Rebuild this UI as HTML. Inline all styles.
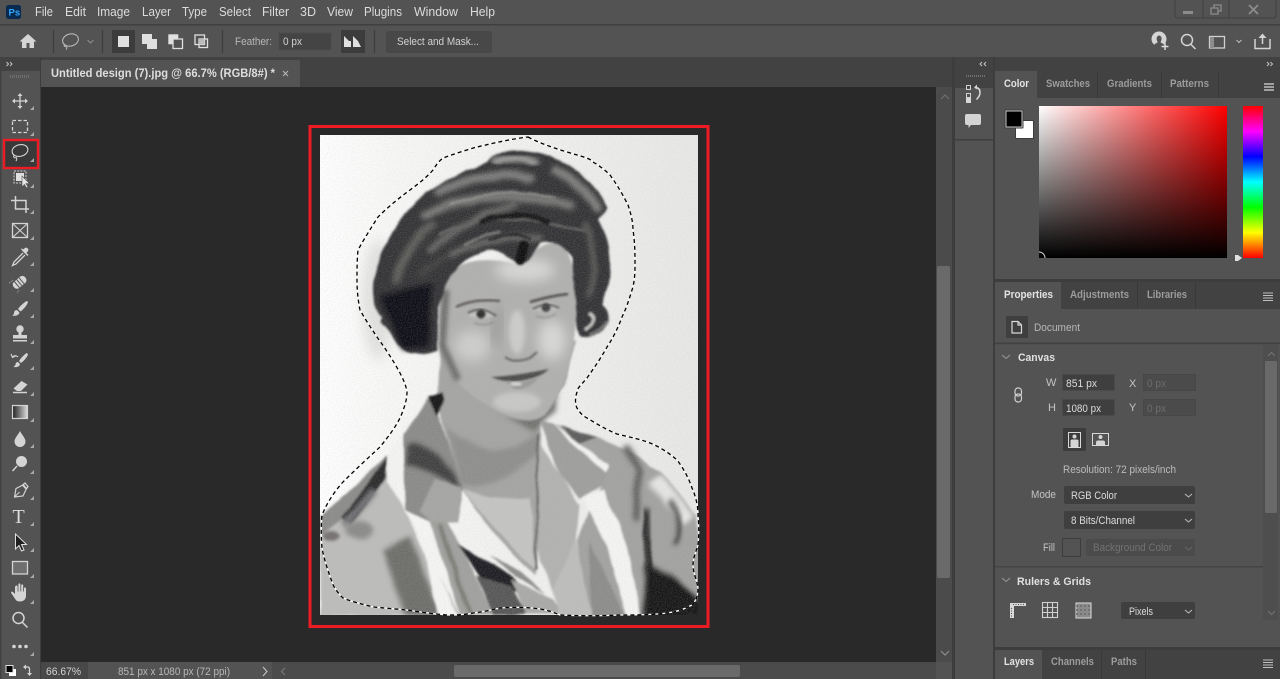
<!DOCTYPE html>
<html><head><meta charset="utf-8"><title>Photoshop</title>
<style>
html,body{margin:0;padding:0;background:#535353;width:1280px;height:679px;overflow:hidden}
svg{display:block}
text{font-family:"Liberation Sans",sans-serif;font-size:12px;fill:#d6d6d6}
.m{font-size:13px;fill:#dcdcdc}
.b{font-weight:bold}
.t{font-weight:bold;font-size:11px;fill:#9c9c9c}
.a{font-weight:bold;font-size:11px;fill:#e4e4e4}
.l{font-size:11px;fill:#c4c4c4}
.i{fill:#d4d4d4}
.s{fill:none;stroke:#d4d4d4;stroke-width:1.5}
.c{fill:none;stroke:#bdbdbd;stroke-width:1}
</style></head><body>
<svg width="1280" height="679" viewBox="0 0 1280 679" xmlns="http://www.w3.org/2000/svg">
<defs>
<linearGradient id="sw" x1="0" x2="1" y1="0" y2="0"><stop offset="0" stop-color="#fff"/><stop offset="1" stop-color="#f00"/></linearGradient>
<linearGradient id="bk" x1="0" x2="0" y1="0" y2="1"><stop offset="0" stop-color="#000" stop-opacity="0"/><stop offset="1" stop-color="#000"/></linearGradient>
<linearGradient id="hue" x1="0" x2="0" y1="0" y2="1"><stop offset="0" stop-color="#f00"/><stop offset=".167" stop-color="#f0f"/><stop offset=".333" stop-color="#00f"/><stop offset=".5" stop-color="#0ff"/><stop offset=".667" stop-color="#0f0"/><stop offset=".833" stop-color="#ff0"/><stop offset="1" stop-color="#f00"/></linearGradient>
<linearGradient id="gr" x1="0" x2="1" y1="0" y2="0"><stop offset="0" stop-color="#222"/><stop offset="1" stop-color="#ddd"/></linearGradient>
<linearGradient id="bg" x1="0" x2="1" y1="0" y2="0"><stop offset="0" stop-color="#fff"/><stop offset=".2" stop-color="#f8f8f7"/><stop offset=".7" stop-color="#eeeeec"/><stop offset="1" stop-color="#e8e8e6"/></linearGradient>
<clipPath id="ph"><rect x="320" y="135" width="378" height="480"/></clipPath>
<filter id="b1" x="-20%" y="-20%" width="140%" height="140%"><feGaussianBlur stdDeviation="1"/></filter>
<filter id="b2" x="-40%" y="-40%" width="180%" height="180%"><feGaussianBlur stdDeviation="2.5"/></filter>
<filter id="b3" x="-60%" y="-60%" width="220%" height="220%"><feGaussianBlur stdDeviation="6"/></filter>
<filter id="org" filterUnits="userSpaceOnUse" x="300" y="120" width="420" height="510">
<feTurbulence type="fractalNoise" baseFrequency=".03" numOctaves="2" seed="4" result="n"/>
<feDisplacementMap in="SourceGraphic" in2="n" scale="6" xChannelSelector="R" yChannelSelector="G"/>
<feGaussianBlur stdDeviation="1.100"/>
</filter>
<filter id="hairf" filterUnits="userSpaceOnUse" x="300" y="120" width="420" height="510">
<feTurbulence type="fractalNoise" baseFrequency=".05" numOctaves="2" seed="9" result="n"/>
<feDisplacementMap in="SourceGraphic" in2="n" scale="4" xChannelSelector="G" yChannelSelector="R"/>
<feGaussianBlur stdDeviation="1"/>
</filter>
<filter id="grain" filterUnits="userSpaceOnUse" x="320" y="135" width="378" height="480">
<feTurbulence type="fractalNoise" baseFrequency=".8" numOctaves="2" seed="2"/>
<feColorMatrix values="0 0 0 0 .5  0 0 0 0 .5  0 0 0 0 .5  .9 0 0 0 -.32"/>
</filter>
</defs>

<!-- base -->
<rect width="1280" height="679" fill="#535353"/>
<!-- top bars -->
<rect x="0" y="24" width="1280" height="1.5" fill="#3f3f3f"/>
<rect x="0" y="57" width="1280" height="31" fill="#424242"/>
<rect x="952" y="57" width="3" height="622" fill="#3d3d3d"/>
<rect x="993" y="57" width="2" height="622" fill="#3d3d3d"/>
<rect x="955" y="58" width="38" height="13" fill="#424242"/>
<rect x="995" y="58" width="285" height="13" fill="#424242"/>
<rect x="0" y="58" width="40" height="13" fill="#424242"/>
<rect x="40" y="58" width="2" height="621" fill="#3d3d3d"/>
<rect x="0" y="71" width="40" height="17" fill="#535353"/>
<rect x="0" y="71" width="1.500" height="608" fill="#424242"/>

<!-- menu -->
<rect x="6" y="5" width="15" height="14" rx="2.5" fill="#0a2b4f"/>
<text x="8.5" y="15.5" style="font-size:9.5px;font-weight:bold;fill:#31a8ff">Ps</text>
<text class="m" x="35" y="16" textLength="18" lengthAdjust="spacingAndGlyphs">File</text>
<text class="m" x="65" y="16" textLength="21" lengthAdjust="spacingAndGlyphs">Edit</text>
<text class="m" x="97" y="16" textLength="33" lengthAdjust="spacingAndGlyphs">Image</text>
<text class="m" x="142" y="16" textLength="29" lengthAdjust="spacingAndGlyphs">Layer</text>
<text class="m" x="182" y="16" textLength="25" lengthAdjust="spacingAndGlyphs">Type</text>
<text class="m" x="219" y="16" textLength="32" lengthAdjust="spacingAndGlyphs">Select</text>
<text class="m" x="262" y="16" textLength="27" lengthAdjust="spacingAndGlyphs">Filter</text>
<text class="m" x="300" y="16" textLength="16" lengthAdjust="spacingAndGlyphs">3D</text>
<text class="m" x="327" y="16" textLength="26" lengthAdjust="spacingAndGlyphs">View</text>
<text class="m" x="364" y="16" textLength="38" lengthAdjust="spacingAndGlyphs">Plugins</text>
<text class="m" x="414" y="16" textLength="44" lengthAdjust="spacingAndGlyphs">Window</text>
<text class="m" x="470" y="16" textLength="25" lengthAdjust="spacingAndGlyphs">Help</text>

<!-- window controls -->
<path d="M1175 0V15q0 3 3 3H1273q3 0 3-3V0" fill="none" stroke="#404040"/>
<path d="M1203 0V18M1229 0V18" stroke="#404040"/>
<rect x="1183" y="11" width="10" height="3" fill="#8c8c8c"/>
<path d="M1211 8h7v6h-7zM1214 8V5h7v6h-3" fill="none" stroke="#8c8c8c" stroke-width="1.3"/>
<path d="M1249 5l9 9M1258 5l-9 9" stroke="#8c8c8c" stroke-width="1.8"/>

<!-- options bar -->
<path d="M28 34l-8.500 7.500h2.500V48h4.500v-5h3v5H34v-6.500h2.500z" class="i"/>
<path d="M53.500 30V53M102.500 30V53M222.500 30V53M374.500 30V53" stroke="#3d3d3d" stroke-width="1.300"/>
<ellipse cx="70.500" cy="40" rx="8" ry="6" transform="rotate(-14 70.500 40)" fill="none" stroke="#b8b8b8" stroke-width="1.100"/>
<path d="M65 44c-2 2 0 3 1.500 2.500c1 1.500 0 2.500-.5 3" fill="none" stroke="#b8b8b8" stroke-width="1"/>
<path d="M87.500 40l3 3 3-3" fill="none" stroke="#8f8f8f"/>
<rect x="112" y="30" width="23" height="23" fill="#3c3c3c"/>
<rect x="118" y="36" width="11" height="11" fill="#e0e0e0"/>
<rect x="142" y="34" width="10" height="10" fill="#e0e0e0"/><rect x="147" y="39" width="10" height="10" fill="#e0e0e0"/>
<rect x="168.800" y="34.800" width="9" height="9" fill="#e0e0e0" stroke="#e0e0e0"/><rect x="173" y="39" width="9.500" height="9.500" fill="#535353" stroke="#e0e0e0" stroke-width="1.300"/>
<rect x="195" y="35" width="9.500" height="9.500" fill="none" stroke="#e0e0e0" stroke-width="1.300"/><rect x="199" y="39" width="8.500" height="8.500" fill="none" stroke="#e0e0e0" stroke-width="1.300"/><rect x="199" y="39" width="5.500" height="5.500" fill="#bbb"/>
<text x="235" y="45" style="font-size:11px;fill:#b8b8b8" textLength="37" lengthAdjust="spacingAndGlyphs">Feather:</text>
<rect x="279" y="33" width="52" height="17" fill="#444" stroke="#4b4b4b"/>
<text x="283" y="45" style="font-size:11px;fill:#d2d2d2" textLength="19" lengthAdjust="spacingAndGlyphs">0 px</text>
<rect x="341" y="30" width="24" height="23" fill="#3c3c3c"/>
<path d="M344 47V36l5 5 2 0v6zM353 47V36l5 5 3 6z" fill="#e0e0e0"/>
<rect x="386.500" y="31.500" width="105" height="21" rx="2" fill="#484848" stroke="#474747"/>
<text x="397" y="45" style="font-size:11px;fill:#d2d2d2" textLength="82" lengthAdjust="spacingAndGlyphs">Select and Mask...</text>

<!-- options right icons -->
<circle cx="1159" cy="39" r="7.500" class="i"/>
<path d="M1159 35.500a2.600 3 0 0 1 2.600 3c0 2-1 3-1 4l3 1.500v3h-9v-3l3-1.500c0-1-1-2-1-4a2.600 3 0 0 1 2.400-3z" fill="#535353"/>
<path d="M1165 43v7M1161.500 46.500h7" stroke="#e0e0e0" stroke-width="1.400"/>
<circle cx="1187" cy="40" r="5.500" class="s"/><path d="M1191 44.500l4.500 4.500" class="s" stroke-width="2"/>
<rect x="1209.500" y="36.500" width="15" height="11.500" fill="none" stroke="#d0d0d0" stroke-width="1.300"/><rect x="1210" y="37" width="4" height="11" fill="#8d8d8d"/>
<path d="M1236.500 40l2.500 2.500 2.500-2.500" class="c"/>
<path d="M1255 39v9.500h15V39" class="s"/><path d="M1262.500 44V35" class="s"/><path d="M1258.500 38l4-4.500 4 4.500z" class="i"/>

<!-- collapse arrows -->
<g fill="none" stroke="#c4c4c4" stroke-width="1">
<path d="M6.500 62l2 2-2 2M10 62l2 2-2 2"/>
<path d="M982 62l-2 2 2 2M986 62l-2 2 2 2"/>
<path d="M1267 62l2 2-2 2M1270.500 62l2 2-2 2"/>
</g>

<!-- document tab -->
<rect x="41" y="60" width="259" height="27" fill="#535353"/>
<text x="51" y="77" class="b" style="fill:#dedede;font-size:12px" textLength="224" lengthAdjust="spacingAndGlyphs">Untitled design (7).jpg @ 66.7% (RGB/8#) *</text>
<path d="M283 71l5 5M288 71l-5 5" stroke="#b5b5b5" stroke-width="1.100"/>

<!-- canvas -->
<rect x="41" y="87" width="895" height="575" fill="#292929"/>

<!-- photo -->
<g clip-path="url(#ph)">
<rect x="320" y="135" width="378" height="480" fill="url(#bg)"/>
<ellipse cx="378" cy="300" rx="16" ry="60" fill="#e2e2e0" filter="url(#b3)"/>

<g filter="url(#org)">
<!-- neck + chest -->
<path d="M440 340L437 405L462 490L500 540L535 575L545 520L540 425L565 385L575 340Z" fill="#a4a4a2"/>
<path d="M463 490L490 498L530 498L536 570L510 545Z" fill="#c4c4c2"/>
<path d="M445 425Q490 470 538 432L540 450Q495 495 462 485Z" fill="#8e8e8c" filter="url(#b2)"/>
<path d="M500 415Q530 428 560 392L555 410L535 432Z" fill="#727270" filter="url(#b2)"/>
<path d="M538 435L536 570" stroke="#5a5a5a" stroke-width="2" fill="none"/>

<!-- shirt left -->
<path d="M320 525L345 500L387 470L405 510L432 562L460 615H320Z" fill="#bcbcba"/>
<path d="M320 518L387 455L385 478L345 518L320 535Z" fill="#8b8b89"/>
<path d="M342 518L387 456L386 478L352 525Z" fill="#29292b"/>
<path d="M345 525L375 490" stroke="#77777a" stroke-width="8" filter="url(#b2)"/>
<path d="M383 552L410 535L435 600L440 615H405Z" fill="#6d6d6b" filter="url(#b2)"/>
<ellipse cx="360" cy="530" rx="14" ry="9" fill="#8a8a88" filter="url(#b2)"/>
<ellipse cx="331" cy="536" rx="9" ry="5" fill="#75706f" filter="url(#b1)"/>
<path d="M407 515L433 562L457 615H437L427 562Z" fill="#f6f6f4"/>
<path d="M430 522H447L473 568L493 615H460L447 572Z" fill="#a0a09e"/>
<path d="M440 525L470 615" stroke="#77776f" stroke-width="4" filter="url(#b1)"/>
<path d="M457 543L512 575L523 590L490 590L473 565Z" fill="#1e1e20"/>
<path d="M477 575L510 585L526 615H493Z" fill="#565656"/>
<path d="M510 578L553 600L562 615H525Z" fill="#a9a9a7"/>
<path d="M490 555L520 570L545 595L515 575Z" fill="#8c8c8a"/>

<!-- collar left -->
<path d="M427 398L403 435L405 508L430 522L457 522L463 488L437 412Z" fill="#8a8a88"/>
<path d="M408 445Q430 440 455 475L462 490L425 470L405 465Z" fill="#3f3f3f" filter="url(#b2)"/>
<path d="M435 480L462 488L457 522L432 522L420 510Z" fill="#a5a5a3"/>
<path d="M388 455L402 435L405 508L387 482Z" fill="#f5f5f3"/>
<path d="M427 397L443 393L445 400L436 415Z" fill="#141414"/>

<!-- shirt right -->
<path d="M557 425L600 438L633 452L660 472L697 515L705 620H590L578 540L600 485Z" fill="#a2a2a0"/>
<path d="M560 425L597 438L578 444Z" fill="#5b5b5b"/>
<path d="M625 445L640 470L635 520" stroke="#616161" stroke-width="7" fill="none" filter="url(#b2)"/>
<path d="M655 480L690 520" stroke="#e6e6e4" stroke-width="14" fill="none" filter="url(#b2)"/>
<path d="M670 500Q685 520 675 545" stroke="#2e2e2e" stroke-width="4" fill="none" filter="url(#b2)"/>
<path d="M645 510L650 570" stroke="#2a2a2a" stroke-width="10" fill="none" filter="url(#b2)"/>
<path d="M645 565L672 575L705 605V620H645Z" fill="#161618" filter="url(#b2)"/>
<path d="M540 442L580 505L577 538L553 592L540 562L538 508Z" fill="#b2b2b0"/>
<path d="M577 538L593 620H560L553 592Z" fill="#bdbdbb"/>
<path d="M590 540L625 620H592Z" fill="#8c8c8a"/>
<path d="M540 422L557 425L608 468L600 485L580 498L560 475Z" fill="#9e9e9c"/>
<path d="M553 423L608 465L605 472L567 438Z" fill="#f4f4f2"/>
<path d="M583 498L603 488L627 548L643 620H627L607 548Z" fill="#f5f5f3"/>
</g>

<!-- face -->
<path d="M443 280C455 262 480 255 515 264C530 258 540 240 560 243C570 250 575 270 576 300C577 320 574 345 570 360C566 380 556 402 545 415C535 423 518 422 500 412C480 402 462 390 450 372C440 350 436 315 443 280Z" fill="#b0b0ae" filter="url(#b1)"/>
<ellipse cx="525" cy="270" rx="30" ry="12" fill="#dededc" filter="url(#b3)" opacity=".85"/>
<ellipse cx="472" cy="346" rx="18" ry="16" fill="#d8d8d6" filter="url(#b3)" opacity=".75"/>
<ellipse cx="552" cy="340" rx="14" ry="20" fill="#e2e2e0" filter="url(#b3)" opacity=".8"/>
<ellipse cx="517" cy="332" rx="8" ry="22" fill="#d6d6d4" filter="url(#b2)" opacity=".75"/>
<path d="M500 308L494 345" stroke="#8f8f8d" stroke-width="6" filter="url(#b3)"/>
<ellipse cx="517" cy="402" rx="24" ry="10" fill="#cececc" filter="url(#b2)" opacity=".8"/>
<path d="M446 290L442 345L458 380" stroke="#6c6c6a" stroke-width="7" fill="none" filter="url(#b2)"/>
<!-- brows -->
<path d="M456 307Q475 298 500 301" stroke="#5a5654" stroke-width="2.500" fill="none" filter="url(#b1)"/>
<path d="M530 302Q550 296 568 294" stroke="#4a4745" stroke-width="2.500" fill="none" filter="url(#b1)"/>
<!-- eyes -->
<ellipse cx="481" cy="314" rx="13" ry="4.500" fill="#c2c2c0" filter="url(#b1)"/>
<path d="M468 313Q482 305 496 316" stroke="#383838" stroke-width="1.500" fill="none" filter="url(#b1)"/>
<circle cx="481" cy="314" r="4.500" fill="#2c2c2c" filter="url(#b1)"/>
<ellipse cx="546" cy="308" rx="12" ry="4.500" fill="#bcbcba" filter="url(#b1)"/>
<path d="M533 309Q546 301 559 308" stroke="#404040" stroke-width="1.400" fill="none" filter="url(#b1)"/>
<circle cx="546" cy="307.500" r="4.500" fill="#414141" filter="url(#b1)"/>
<path d="M474 323Q484 327 494 322M536 316Q546 320 556 314" stroke="#8a8a88" stroke-width="1.300" fill="none" filter="url(#b1)"/>
<!-- nose -->
<path d="M505 357Q514 364 530 358L537 352" stroke="#5b5b59" stroke-width="2" fill="none" filter="url(#b1)"/>
<!-- mouth -->
<path d="M491 377Q515 376 549 369Q540 378 520 381Q505 383 491 377Z" fill="#4a4a48" filter="url(#b1)"/>
<path d="M505 381Q525 384 540 376Q530 390 515 389Z" fill="#9a9a98" filter="url(#b1)"/>
<ellipse cx="516" cy="384" rx="6" ry="1.800" fill="#dcdcda" filter="url(#b1)"/>

<!-- hair -->
<g filter="url(#hairf)">
<path d="M373 290C372 270 385 245 403 215C420 195 445 178 487 162C495 155 505 150 515 150C530 152 540 152 553 158C575 165 595 185 608 208C604 214 600 216 598 220C606 235 611 250 610 270C610 290 603 295 602 305C608 312 610 318 606 325C600 335 590 338 580 336C574 325 576 290 572 258C565 245 552 240 540 243C534 250 530 262 520 263C510 260 498 248 487 250C470 255 455 268 445 285C438 305 436 330 438 350C425 355 412 355 403 350C392 342 395 335 382 325C378 320 385 318 380 315C375 305 373 298 373 290Z" fill="#333335"/>
<g fill="none" stroke-linecap="round">
<path d="M495 162Q515 154 535 162" stroke="#a4a4a2" stroke-width="7" filter="url(#b2)"/>
<path d="M555 170Q580 182 598 208" stroke="#7e7e7c" stroke-width="9" filter="url(#b2)"/>
<path d="M440 192Q490 168 530 178" stroke="#7c7c7a" stroke-width="9" filter="url(#b2)"/>
<path d="M425 215Q480 185 570 205" stroke="#777775" stroke-width="9" filter="url(#b2)"/>
<path d="M430 250Q470 215 515 205" stroke="#6c6c6a" stroke-width="6" filter="url(#b2)"/>
<path d="M450 255Q490 235 540 238" stroke="#6f6f6d" stroke-width="5" filter="url(#b2)"/>
<path d="M440 235Q490 205 585 232" stroke="#656563" stroke-width="2"/>
<path d="M450 205Q500 185 555 198" stroke="#9a9a98" stroke-width="1.400"/>
<path d="M465 245Q480 235 500 232" stroke="#8c8c8a" stroke-width="1.600"/>
<path d="M482 222Q515 208 548 222" stroke="#121214" stroke-width="6"/>
<path d="M490 240Q510 232 530 238" stroke="#1c1c1e" stroke-width="2.500"/>
<path d="M524 244L520 260" stroke="#0e0e10" stroke-width="9"/>
<path d="M396 280Q408 242 432 225" stroke="#5e5e5c" stroke-width="8" filter="url(#b2)"/>
<path d="M420 275Q432 262 445 258" stroke="#474745" stroke-width="4" filter="url(#b2)"/>
<path d="M585 225Q600 255 590 295" stroke="#5e5e5c" stroke-width="5" filter="url(#b2)"/>
<path d="M590 314Q599 320 586 328" stroke="#c8c8c6" stroke-width="3"/>
<path d="M590 334Q600 332 606 322" stroke="#7a7a78" stroke-width="2"/>
</g>
<path d="M380 296L432 283L428 347L402 350Z" fill="#111113" filter="url(#b2)"/>
</g>

<rect x="320" y="135" width="378" height="480" filter="url(#grain)" opacity=".5"/>
</g>

<!-- marching ants -->
<g fill="none">
<path d="M528 137C535 141 550 147 567 152C580 156 590 158 593 162C600 166 606 171 610 175C618 186 624 197 628 205C631 214 633 222 633 230C635 243 635 255 635 267C635 276 634 284 632 290C629 300 626 309 622 317C618 328 613 338 607 347C601 358 594 368 587 378C582 384 577 388 577 392C575 398 575 404 577 408C580 413 583 416 587 418C597 424 607 430 617 434C629 437 640 439 650 443C660 447 669 453 677 460C684 469 689 479 692 488C696 497 698 506 698 515C699 526 699 536 698 545C696 552 693 558 693 565C693 573 697 580 698 588C698 596 696 601 692 605C685 609 676 612 667 613C652 615 636 615 620 615C600 616 580 616 560 615C553 612 547 610 540 609C527 607 513 607 500 608C491 610 482 612 473 613C464 615 456 615 447 615C434 614 420 612 407 610C396 609 384 608 373 607C362 604 352 602 343 598C338 593 334 588 332 582C328 571 324 559 322 548C321 537 321 526 322 515C327 503 334 492 343 482C355 470 368 458 380 447C388 437 395 428 400 418C404 409 407 400 407 392C406 385 403 379 400 373C393 360 385 348 377 337C371 328 365 319 360 310C358 300 357 290 357 280C357 270 357 260 358 250C364 239 371 228 378 217C388 207 399 198 410 190C418 184 426 178 433 170C436 165 439 161 443 158C454 154 466 150 477 147C494 143 511 139 528 137Z" stroke="#fff" stroke-width="1.300"/>
<path d="M528 137C535 141 550 147 567 152C580 156 590 158 593 162C600 166 606 171 610 175C618 186 624 197 628 205C631 214 633 222 633 230C635 243 635 255 635 267C635 276 634 284 632 290C629 300 626 309 622 317C618 328 613 338 607 347C601 358 594 368 587 378C582 384 577 388 577 392C575 398 575 404 577 408C580 413 583 416 587 418C597 424 607 430 617 434C629 437 640 439 650 443C660 447 669 453 677 460C684 469 689 479 692 488C696 497 698 506 698 515C699 526 699 536 698 545C696 552 693 558 693 565C693 573 697 580 698 588C698 596 696 601 692 605C685 609 676 612 667 613C652 615 636 615 620 615C600 616 580 616 560 615C553 612 547 610 540 609C527 607 513 607 500 608C491 610 482 612 473 613C464 615 456 615 447 615C434 614 420 612 407 610C396 609 384 608 373 607C362 604 352 602 343 598C338 593 334 588 332 582C328 571 324 559 322 548C321 537 321 526 322 515C327 503 334 492 343 482C355 470 368 458 380 447C388 437 395 428 400 418C404 409 407 400 407 392C406 385 403 379 400 373C393 360 385 348 377 337C371 328 365 319 360 310C358 300 357 290 357 280C357 270 357 260 358 250C364 239 371 228 378 217C388 207 399 198 410 190C418 184 426 178 433 170C436 165 439 161 443 158C454 154 466 150 477 147C494 143 511 139 528 137Z" stroke="#000" stroke-width="1.300" stroke-dasharray="4 3"/>
</g>

<!-- red frame -->
<rect x="310" y="126.500" width="398" height="500" fill="none" stroke="#ed1c24" stroke-width="3"/>

<!-- vertical scrollbar -->
<rect x="936" y="87" width="16" height="575" fill="#4b4b4b"/>
<rect x="937" y="266" width="13" height="312" rx="2" fill="#6a6a6a"/>
<path d="M941 99l4-4 4 4" fill="none" stroke="#6f6f6f" stroke-width="1.200"/>
<path d="M941 651l4 4 4-4" fill="none" stroke="#8f8f8f" stroke-width="1.200"/>

<!-- status bar -->
<rect x="41" y="662" width="911" height="17" fill="#535353"/>
<rect x="41" y="662" width="47" height="17" fill="#484848"/>
<text x="46" y="675" style="font-size:11px;fill:#d2d2d2" textLength="35" lengthAdjust="spacingAndGlyphs">66.67%</text>
<text x="118" y="675" style="font-size:11px;fill:#b8b8b8" textLength="112" lengthAdjust="spacingAndGlyphs">851 px x 1080 px (72 ppi)</text>
<path d="M263 667l4 4.500-4 4.500" fill="none" stroke="#c4c4c4" stroke-width="1.100"/>
<rect x="272" y="662" width="664" height="17" fill="#4b4b4b"/>
<path d="M285 668l-3.500 3.500 3.500 3.500" fill="none" stroke="#7a7a7a" stroke-width="1.100"/>
<rect x="454" y="665" width="286" height="12" rx="2" fill="#6a6a6a"/>

<!-- toolbar -->
<path d="M10 76.500H29" stroke="#6f6f6f" stroke-width="3" stroke-dasharray="1 1"/>
<rect x="4" y="140" width="34" height="28" fill="#393939"/>
<!-- corner triangles -->
<g fill="#a8a8a8">
<path d="M34 106v4h-4zM34 132v4h-4zM34 158v4h-4zM34 184v4h-4zM34 210v4h-4zM34 236v4h-4zM34 262v4h-4zM34 288v4h-4zM34 314v4h-4zM34 340v4h-4zM34 366v4h-4zM34 392v4h-4zM34 418v4h-4zM34 444v4h-4zM34 470v4h-4zM34 496v4h-4zM34 522v4h-4zM34 548v4h-4zM34 574v4h-4zM34 600v4h-4zM34 652v4h-4z"/>
</g>
<!-- move -->
<path d="M20 94v14M13 101h14" stroke="#d4d4d4" stroke-width="1.300"/>
<path d="M20 93l2.500 3h-5zM20 109l2.500-3h-5zM12 101l3-2.500v5zM28 101l-3-2.500v5z" class="i"/>
<!-- marquee -->
<rect x="12.500" y="120.500" width="15" height="12" fill="none" stroke="#d4d4d4" stroke-width="1.300" stroke-dasharray="3.500 2"/>
<!-- lasso -->
<ellipse cx="20" cy="150.500" rx="8" ry="5.800" transform="rotate(-14 20 150.500)" fill="none" stroke="#d8d8d8" stroke-width="1.100"/>
<path d="M14.500 155c-2 2 0 3.500 1.800 2.500c1 1.500 .2 3-.5 3.500" fill="none" stroke="#d8d8d8" stroke-width="1"/>
<!-- object select -->
<rect x="14" y="171" width="12" height="12" fill="none" stroke="#d0d0d0" stroke-dasharray="2 1.200"/>
<rect x="16" y="173" width="8" height="8" fill="#e0e0e0"/>
<path d="M22 176v11l2.500-2.500 2 3.500 1.500-1-2-3.500h3.500z" fill="#e4e4e4" stroke="#535353" stroke-width=".6"/>
<!-- crop -->
<path d="M11 200.500H26V213M15.500 196V209H29" fill="none" stroke="#d4d4d4" stroke-width="1.500"/>
<!-- frame -->
<rect x="12.500" y="223.500" width="15" height="14" fill="none" stroke="#d4d4d4" stroke-width="1.300"/><path d="M12.500 223.500l15 14M27.500 223.500l-15 14" stroke="#d4d4d4" stroke-width="1.100"/>
<!-- eyedropper -->
<path d="M23 253l-9 9-1.500 3.500 3.500-1.500 9-9" fill="none" stroke="#d4d4d4" stroke-width="1.300"/><path d="M21.500 250l6 6 1-1-2-2 1.500-2a2.200 2.200 0 0 0-3-3l-2 1.500-1.500-1.500z" class="i"/>
<!-- heal -->
<g transform="rotate(-40 20 282)"><rect x="12" y="278" width="15" height="8" rx="3.500" class="i"/><path d="M16 278v8M19 278v8M22 278v8" stroke="#535353"/><path d="M11 276h5M11 288h4" stroke="#aaa" stroke-dasharray="1 1" stroke-width="1"/></g>
<!-- brush -->
<path d="M27 301c-2 .5-7 5-9 8l2.500 2.500c3-2 7-7 7.500-9.500z" class="i"/><path d="M17 310c-2 0-3 1.500-3 3s-1 2-2 2.500c3 .8 7 0 7.500-3z" class="i"/>
<!-- stamp -->
<circle cx="20" cy="329" r="3.700" class="i"/><path d="M18.500 332h3v3h5.500v3.500H13V335h5.500zM13 340h14v1.500H13z" class="i"/>
<!-- history brush -->
<path d="M27 353c-2 .5-6 5-8 8l2 2c3-2 6.500-6.500 7-8.500z" class="i"/><path d="M18 362c-2 0-2.500 1.500-2.500 3l-2 2c3 .5 6 0 6.500-3z" class="i"/><path d="M18 357c-2-2-4-1.500-5-.5M11 354l1.500 3.500 3-1.500" fill="none" stroke="#d4d4d4" stroke-width="1.100"/>
<!-- eraser -->
<path d="M21.500 381l6 3.500-6.500 6.500h-4l-3.500-2.500z" class="i"/><path d="M13 392.500h14" class="s"/>
<!-- gradient -->
<rect x="12.500" y="405.500" width="15" height="13" fill="url(#gr)" stroke="#d4d4d4" stroke-width="1.200"/>
<!-- blur drop -->
<path d="M20 431c-2 4-5.500 7-5.500 10.500a5.500 5.500 0 0 0 11 0c0-3.500-3.500-6.500-5.500-10.500z" class="i"/>
<!-- dodge -->
<circle cx="21.500" cy="461.500" r="5.500" class="i"/><path d="M17 466l-4.500 5" class="s" stroke-width="2"/>
<!-- pen -->
<path d="M25 483l3 3.500-2 3-3 6.500-8.500 1 1.500-8.500 6-3z" fill="none" stroke="#d4d4d4" stroke-width="1.200"/><path d="M14.500 497l5-5" stroke="#d4d4d4"/><path d="M23 485l3 3.500" stroke="#d4d4d4" stroke-width="2"/>
<!-- type -->
<text x="12.500" y="523" style="font-family:'Liberation Serif',serif;font-size:20px;fill:#dcdcdc">T</text>
<!-- path select -->
<path d="M15.500 534v15l3.500-3.500 2.500 5.500 2.500-1-2.500-5.500h5z" fill="#1f1f1f" stroke="#e0e0e0" stroke-width="1"/>
<!-- shape -->
<rect x="12.500" y="561.500" width="15" height="12.500" fill="#6f6f6f" stroke="#d4d4d4" stroke-width="1.300"/>
<!-- hand -->
<path d="M15 589v5l-2-2c-1-1-2.500 0-1.500 1.500l4 6c1 1.500 2.500 2 4.500 2 3.500 0 6-2 6-6v-7c0-1.500-2-1.500-2 0v3h-.8v-6c0-1.500-2-1.500-2 0v6h-.8v-7c0-1.500-2-1.500-2 0v7h-.8v-5c0-1.500-2.600-1.500-2.600 1z" class="i"/>
<!-- zoom -->
<circle cx="18.500" cy="618" r="5.500" class="s"/><path d="M22.500 622.500l5 5" class="s" stroke-width="2"/>
<!-- more -->
<circle cx="14" cy="646.500" r="1.800" class="i"/><circle cx="20" cy="646.500" r="1.800" class="i"/><circle cx="26" cy="646.500" r="1.800" class="i"/>
<!-- fg/bg -->
<rect x="9" y="669" width="7" height="7" fill="#fff"/><rect x="6" y="665.500" width="7" height="7" fill="#000" stroke="#e0e0e0"/>
<path d="M24 667h3.500q2 0 2 2v4" fill="none" stroke="#d4d4d4" stroke-width="1.300"/><path d="M26 664.500l-3 2.500 3 2.500zM27 673h5l-2.500 3z" class="i"/>

<!-- middle icon strip -->
<path d="M966 76h20" stroke="#6f6f6f" stroke-width="2" stroke-dasharray="1 1"/>
<rect x="955" y="139" width="38" height="1.500" fill="#3f3f3f"/>
<rect x="966.500" y="85.500" width="4" height="4" fill="none" stroke="#d0d0d0"/><rect x="966.500" y="93.500" width="4" height="4" fill="none" stroke="#d0d0d0"/><rect x="966" y="98" width="5" height="5" fill="#d8d8d8"/>
<path d="M975 87.500c4 0 5 2.500 5 5 0 3-1.500 5-3.500 7" fill="none" stroke="#d8d8d8" stroke-width="1.500"/><path d="M977 84.500l-3 3 3 2z" class="i"/>
<path d="M967 114h12q2 0 2 2v7q0 2-2 2h-8l-2.500 3v-3h-1.500q-2 0-2-2v-7q0-2 2-2z" class="i"/>

<!-- color panel tabs -->
<rect x="995" y="71" width="285" height="27" fill="#424242"/>
<rect x="995" y="71" width="42" height="27" fill="#535353"/>
<path d="M1097.500 71V98M1161.500 71V98M1218.500 71V98" stroke="#393939"/>
<text class="a" x="1004" y="87" textLength="25" lengthAdjust="spacingAndGlyphs">Color</text>
<text class="t" x="1046" y="87" textLength="44" lengthAdjust="spacingAndGlyphs">Swatches</text>
<text class="t" x="1107" y="87" textLength="45" lengthAdjust="spacingAndGlyphs">Gradients</text>
<text class="t" x="1170" y="87" textLength="39" lengthAdjust="spacingAndGlyphs">Patterns</text>
<path d="M1264 84h10M1264 87h10M1264 90h10" stroke="#c0c0c0" stroke-width="1.500"/>
<!-- swatches -->
<rect x="1015.500" y="120.500" width="18" height="18" rx="1" fill="#fff" stroke="#3c3c3c"/>
<rect x="1004.500" y="109.500" width="19" height="19" rx="1" fill="#3c3c3c"/>
<rect x="1006" y="111" width="16" height="16" fill="#000" stroke="#c8c8c8"/>
<!-- color field -->
<rect x="1039" y="106" width="188" height="152" fill="url(#sw)"/>
<rect x="1039" y="106" width="188" height="152" fill="url(#bk)"/>
<path d="M1039 252a6 6 0 0 1 6 6" fill="none" stroke="#ddd"/>
<rect x="1243" y="106" width="20" height="152" fill="url(#hue)"/>
<path d="M1235 255h3l4 3-4 3h-3z" fill="#e0e0e0"/>

<rect x="995" y="279" width="285" height="3" fill="#3d3d3d"/>

<!-- properties tabs -->
<rect x="995" y="282" width="285" height="27" fill="#424242"/>
<rect x="995" y="282" width="66" height="27" fill="#535353"/>
<path d="M1137.500 282V309M1195.500 282V309" stroke="#393939"/>
<text class="a" x="1004" y="298" textLength="49" lengthAdjust="spacingAndGlyphs">Properties</text>
<text class="t" x="1070" y="298" textLength="59" lengthAdjust="spacingAndGlyphs">Adjustments</text>
<text class="t" x="1147" y="298" textLength="40" lengthAdjust="spacingAndGlyphs">Libraries</text>
<path d="M1263 293h10M1263 295.500h10M1263 298h10M1263 300.500h10" stroke="#c0c0c0" stroke-width="1.100"/>

<!-- document row -->
<rect x="1006" y="316" width="22" height="22" rx="1" fill="#3f3f3f"/>
<path d="M1012 321.500h6l3.500 3.500v8h-9.500zM1018 321.500v3.500h3.500" fill="none" stroke="#d8d8d8" stroke-width="1.200"/>
<text x="1034" y="331" style="font-size:11px;fill:#b8b8b8" textLength="46" lengthAdjust="spacingAndGlyphs">Document</text>
<rect x="995" y="342.500" width="285" height="1.700" fill="#424242"/>

<!-- properties scrollbar -->
<rect x="1263" y="345" width="15" height="275" fill="#4e4e4e"/>
<rect x="1265" y="361" width="12" height="152" rx="1" fill="#696969"/>
<path d="M1268 356l3.500-3.500 3.500 3.500M1268 611l3.500 3.500 3.500-3.500" fill="none" stroke="#747474" stroke-width="1.100"/>

<!-- canvas section -->
<path d="M1002 355l4 3.500 4-3.500" fill="none" stroke="#9a9a9a"/>
<text x="1018" y="361" class="b" style="font-size:11px;fill:#e0e0e0" textLength="37" lengthAdjust="spacingAndGlyphs">Canvas</text>
<text class="l" x="1046" y="386">W</text>
<rect x="1062.500" y="374.500" width="52" height="16" fill="#3f3f3f" stroke="#4a4a4a"/>
<text x="1066" y="387" style="font-size:11px;fill:#dcdcdc" textLength="31" lengthAdjust="spacingAndGlyphs">851 px</text>
<text class="l" x="1129" y="387">X</text>
<rect x="1143.500" y="374.500" width="52" height="16" fill="#4b4b4b" stroke="#474747"/>
<text x="1147" y="387" style="font-size:11px;fill:#6c6c6c" textLength="19" lengthAdjust="spacingAndGlyphs">0 px</text>
<text class="l" x="1048" y="411">H</text>
<rect x="1062.500" y="399.500" width="52" height="16" fill="#3f3f3f" stroke="#4a4a4a"/>
<text x="1066" y="412" style="font-size:11px;fill:#dcdcdc" textLength="35" lengthAdjust="spacingAndGlyphs">1080 px</text>
<text class="l" x="1129" y="411">Y</text>
<rect x="1143.500" y="399.500" width="52" height="16" fill="#4b4b4b" stroke="#474747"/>
<text x="1147" y="412" style="font-size:11px;fill:#6c6c6c" textLength="19" lengthAdjust="spacingAndGlyphs">0 px</text>
<rect x="1015" y="388" width="6.500" height="8" rx="3" fill="none" stroke="#d0d0d0" stroke-width="1.200"/><rect x="1015" y="394" width="6.500" height="8" rx="3" fill="none" stroke="#d0d0d0" stroke-width="1.200"/>

<rect x="1063" y="428" width="23" height="23" rx="1" fill="#3c3c3c"/>
<rect x="1068.500" y="432.500" width="12" height="15" fill="none" stroke="#d8d8d8"/>
<circle cx="1074.500" cy="436.500" r="2" class="i"/><path d="M1070.500 447v-6q0-1.500 1.500-1.500h5q1.500 0 1.500 1.500v6z" class="i"/>
<rect x="1092.500" y="433.500" width="16" height="12" fill="none" stroke="#d8d8d8"/>
<circle cx="1100.500" cy="437" r="2" class="i"/><path d="M1096 445v-2.500q0-2 2-2h5q2 0 2 2v2.500z" class="i"/>
<text x="1063" y="473" style="font-size:11px;fill:#bcbcbc" textLength="113" lengthAdjust="spacingAndGlyphs">Resolution: 72 pixels/inch</text>

<text class="l" x="1031" y="498" textLength="25" lengthAdjust="spacingAndGlyphs">Mode</text>
<rect x="1064" y="486" width="131" height="18" rx="2" fill="#3f3f3f"/>
<text x="1071" y="499" style="font-size:11px;fill:#dcdcdc" textLength="46" lengthAdjust="spacingAndGlyphs">RGB Color</text>
<path d="M1185 494l3.500 3 3.500-3" class="c"/>
<rect x="1064" y="511" width="131" height="18" rx="2" fill="#3f3f3f"/>
<text x="1071" y="524" style="font-size:11px;fill:#dcdcdc" textLength="64" lengthAdjust="spacingAndGlyphs">8 Bits/Channel</text>
<path d="M1185 519l3.500 3 3.500-3" class="c"/>
<text class="l" x="1043" y="551" textLength="12" lengthAdjust="spacingAndGlyphs">Fill</text>
<rect x="1062.500" y="538.500" width="18" height="18" fill="#535353" stroke="#3d3d3d"/>
<rect x="1086" y="539" width="109" height="17" rx="2" fill="#4b4b4b"/>
<text x="1093" y="551" style="font-size:11px;fill:#727272" textLength="79" lengthAdjust="spacingAndGlyphs">Background Color</text>
<path d="M1185 547l3.500 3 3.500-3" fill="none" stroke="#666"/>
<rect x="995" y="566" width="268" height="1.500" fill="#444"/>

<!-- rulers -->
<path d="M1002 578l4 3.500 4-3.500" fill="none" stroke="#9a9a9a"/>
<text x="1017" y="585" class="b" style="font-size:11px;fill:#e0e0e0" textLength="74" lengthAdjust="spacingAndGlyphs">Rulers &amp; Grids</text>
<path d="M1010 603h16v3h-12v12h-4z" fill="#d8d8d8"/>
<path d="M1013 604.500h12M1011.500 608v9" stroke="#535353" stroke-dasharray="1 1.500"/>
<rect x="1042.500" y="602.500" width="15" height="15" fill="none" stroke="#d0d0d0" stroke-width="1.100"/><path d="M1047.500 602.500v15M1052.500 602.500v15M1042.500 607.500h15M1042.500 612.500h15" stroke="#d0d0d0" stroke-width="1.100"/>
<rect x="1076" y="603" width="15" height="15" fill="#8b8b8b" stroke="#d0d0d0" stroke-width="1.100"/><path d="M1076 606h15M1076 610h15M1076 614h15" stroke="#6a6a6a" stroke-width="1.500" stroke-dasharray="2 2"/>
<rect x="1121" y="602" width="74" height="17" rx="2" fill="#3f3f3f"/>
<text x="1129" y="615" style="font-size:11px;fill:#dcdcdc" textLength="24" lengthAdjust="spacingAndGlyphs">Pixels</text>
<path d="M1185 610l3.500 3 3.500-3" class="c"/>

<!-- layers tabs -->
<rect x="995" y="647" width="285" height="3" fill="#3d3d3d"/>
<rect x="995" y="650" width="285" height="29" fill="#424242"/>
<rect x="995" y="650" width="47" height="29" fill="#535353"/>
<path d="M1101.500 650V679M1145.500 650V679" stroke="#393939"/>
<text class="a" x="1004" y="665" textLength="30" lengthAdjust="spacingAndGlyphs">Layers</text>
<text class="t" x="1051" y="665" textLength="43" lengthAdjust="spacingAndGlyphs">Channels</text>
<text class="t" x="1111" y="665" textLength="26" lengthAdjust="spacingAndGlyphs">Paths</text>
<path d="M1263 660h10M1263 662.500h10M1263 665h10M1263 667.500h10" stroke="#c0c0c0" stroke-width="1.100"/>

<!-- red tool highlight on top -->
<rect x="4" y="140" width="34" height="28" fill="none" stroke="#ed1c24" stroke-width="2.400"/>
</svg>
</body></html>
